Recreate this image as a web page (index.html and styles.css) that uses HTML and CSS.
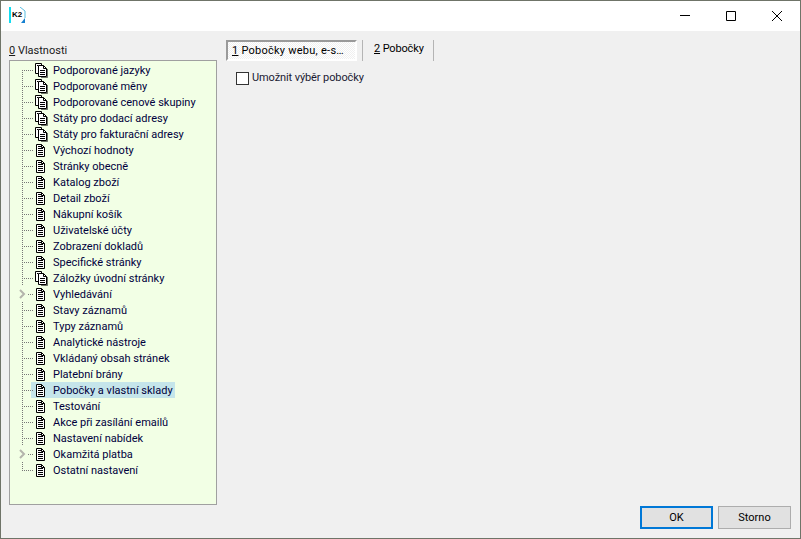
FILE: index.html
```html
<!DOCTYPE html>
<html lang="cs">
<head>
<meta charset="utf-8">
<title>K2</title>
<link rel="stylesheet" href="styles.css">
</head>
<body>
<svg class="defs" width="0" height="0" aria-hidden="true">
  <symbol id="page" viewBox="0 0 14 16">
    <path d="M2.500 2.500h5l3 3v9h-8z" fill="#fff" stroke="#000"/>
    <path d="M7.500 2.500v3h3M4 4.500h3M4 6.500h5M4 8.500h5M4 10.500h5M4 12.500h5" fill="none" stroke="#000"/>
  </symbol>
  <symbol id="pages" viewBox="0 0 14 16">
    <path d="M1.500 1.500h6v10h-6z" fill="#fff" stroke="#000"/>
    <path d="M4.500 3.500h5l3 3v8h-8z" fill="#fff" stroke="#000"/>
    <path d="M3 3.500h1M9.500 3.500v3h3M6 8.500h5M6 10.500h5M6 12.500h5" fill="none" stroke="#000"/>
    <path d="M13.500 7v8.500H7" fill="none" stroke="#000" opacity=".55"/>
  </symbol>
</svg>
<div class="window">
  <header class="titlebar">
    <svg class="logo" width="17" height="17" viewBox="0 0 17 17" aria-hidden="true">
      <rect x="0" y="0" width="2" height="16" fill="#12dcf0"/>
      <path d="M11 0l5 4v7" fill="none" stroke="#58bde0"/>
      <path d="M12 16l4-5v5h-4z" fill="#1680d0"/>
      <text x="3" y="10" class="logo-text">K2</text>
    </svg>
    <div class="controls">
      <svg width="12" height="12" viewBox="0 0 12 12" aria-hidden="true"><path d="M1 5.500h10" stroke="#000" fill="none"/></svg>
      <svg width="12" height="12" viewBox="0 0 12 12" aria-hidden="true"><path d="M1.500 1.500h9v9h-9z" stroke="#000" fill="none"/></svg>
      <svg width="12" height="12" viewBox="0 0 12 12" aria-hidden="true"><path d="M1 1l10 10M11 1L1 11" stroke="#000" fill="none"/></svg>
    </div>
  </header>
  <div class="content">
    <aside class="sidebar">
      <div class="side-label"><u>0</u> Vlastnosti</div>
      <ul class="tree">
        <li class="row first"><span class="branch"></span><svg class="ico"><use href="#pages"/></svg><span class="lbl">Podporované jazyky</span></li>
        <li class="row"><span class="branch"></span><svg class="ico"><use href="#pages"/></svg><span class="lbl">Podporované měny</span></li>
        <li class="row"><span class="branch"></span><svg class="ico"><use href="#pages"/></svg><span class="lbl">Podporované cenové skupiny</span></li>
        <li class="row"><span class="branch"></span><svg class="ico"><use href="#pages"/></svg><span class="lbl">Státy pro dodací adresy</span></li>
        <li class="row"><span class="branch"></span><svg class="ico"><use href="#pages"/></svg><span class="lbl">Státy pro fakturační adresy</span></li>
        <li class="row"><span class="branch"></span><svg class="ico"><use href="#page"/></svg><span class="lbl">Výchozí hodnoty</span></li>
        <li class="row"><span class="branch"></span><svg class="ico"><use href="#page"/></svg><span class="lbl">Stránky obecně</span></li>
        <li class="row"><span class="branch"></span><svg class="ico"><use href="#page"/></svg><span class="lbl">Katalog zboží</span></li>
        <li class="row"><span class="branch"></span><svg class="ico"><use href="#page"/></svg><span class="lbl">Detail zboží</span></li>
        <li class="row"><span class="branch"></span><svg class="ico"><use href="#page"/></svg><span class="lbl">Nákupní košík</span></li>
        <li class="row"><span class="branch"></span><svg class="ico"><use href="#page"/></svg><span class="lbl">Uživatelské účty</span></li>
        <li class="row"><span class="branch"></span><svg class="ico"><use href="#page"/></svg><span class="lbl">Zobrazení dokladů</span></li>
        <li class="row"><span class="branch"></span><svg class="ico"><use href="#page"/></svg><span class="lbl">Specifické stránky</span></li>
        <li class="row"><span class="branch"></span><svg class="ico"><use href="#pages"/></svg><span class="lbl">Záložky úvodní stránky</span></li>
        <li class="row"><span class="branch has-kids"><svg class="chev" width="7" height="10" viewBox="0 0 7 10" aria-hidden="true"><path d="M1 1l4 4-4 4" fill="none" stroke="#b4b4ac" stroke-width="2"/></svg></span><svg class="ico"><use href="#page"/></svg><span class="lbl">Vyhledávání</span></li>
        <li class="row"><span class="branch"></span><svg class="ico"><use href="#page"/></svg><span class="lbl">Stavy záznamů</span></li>
        <li class="row"><span class="branch"></span><svg class="ico"><use href="#page"/></svg><span class="lbl">Typy záznamů</span></li>
        <li class="row"><span class="branch"></span><svg class="ico"><use href="#page"/></svg><span class="lbl">Analytické nástroje</span></li>
        <li class="row"><span class="branch"></span><svg class="ico"><use href="#page"/></svg><span class="lbl">Vkládaný obsah stránek</span></li>
        <li class="row"><span class="branch"></span><svg class="ico"><use href="#page"/></svg><span class="lbl">Platební brány</span></li>
        <li class="row selected"><span class="branch"></span><svg class="ico"><use href="#page"/></svg><span class="lbl">Pobočky a vlastní sklady</span></li>
        <li class="row"><span class="branch"></span><svg class="ico"><use href="#page"/></svg><span class="lbl">Testování</span></li>
        <li class="row"><span class="branch"></span><svg class="ico"><use href="#page"/></svg><span class="lbl">Akce při zasílání emailů</span></li>
        <li class="row"><span class="branch"></span><svg class="ico"><use href="#page"/></svg><span class="lbl">Nastavení nabídek</span></li>
        <li class="row"><span class="branch has-kids"><svg class="chev" width="7" height="10" viewBox="0 0 7 10" aria-hidden="true"><path d="M1 1l4 4-4 4" fill="none" stroke="#b4b4ac" stroke-width="2"/></svg></span><svg class="ico"><use href="#page"/></svg><span class="lbl">Okamžitá platba</span></li>
        <li class="row last"><span class="branch"></span><svg class="ico"><use href="#page"/></svg><span class="lbl">Ostatní nastavení</span></li>
      </ul>
    </aside>
    <main class="panel">
      <div class="tabs">
        <div class="tab active"><u>1</u> Pobočky webu, e-s…</div>
        <div class="tab plain"><u>2</u> Pobočky</div>
      </div>
      <label class="check"><span class="box"></span>Umožnit výběr pobočky</label>
    </main>
  </div>
  <footer class="footer">
    <button class="btn default">OK</button>
    <button class="btn">Storno</button>
  </footer>
</div>
</body>
</html>
```
FILE: styles.css
```css
* { box-sizing: border-box; }
html, body { margin: 0; padding: 0; height: 100%; overflow: hidden; }
body { font: 11px/16px Roboto, "Noto Sans", sans-serif; color: #000; background: #f0f0f0; }
.defs { display: block; height: 0; }
.window {
  width: 801px; height: 539px;
  border: 1px solid #6f7468;
  display: flex; flex-direction: column;
  background: #f0f0f0;
}
.titlebar { height: 30px; background: #fff; display: flex; align-items: flex-start; justify-content: space-between; flex: none; }
.logo { margin: 6px 0 0 8px; }
.logo-text { font: bold 8px "Liberation Sans", sans-serif; fill: #000; }
.controls { display: flex; gap: 34px; padding: 9px 17px 0 0; }
.content { flex: 1; display: flex; min-height: 0; padding-left: 8px; }
.sidebar { width: 208px; display: flex; flex-direction: column; flex: none; height: 474px; }
.side-label { height: 29px; padding-top: 12px; line-height: 16px; color: #1a1a1a; }
.tree {
  list-style: none; margin: 0; padding: 1px 0 0 0;
  flex: 1;
  background: #f2ffe5;
  border: 1px solid #a0a0a0;
}
.row { height: 16px; display: flex; align-items: center; position: relative; width: max-content; padding-right: 2px; margin-left: 21px; padding-left: 3px; color: #00003c; }
.lbl { height: 16px; line-height: 18px; }
.branch { position: absolute; left: -9px; top: 0; width: 12px; height: 16px;
  background:
    repeating-linear-gradient(to bottom, #777 0 1px, transparent 1px 2px) left top / 1px 100% no-repeat,
    repeating-linear-gradient(to right, #777 0 1px, transparent 1px 2px) left 8px / 100% 1px no-repeat;
}
.first .branch { background:
    repeating-linear-gradient(to bottom, #777 0 1px, transparent 1px 2px) left 8px / 1px 8px no-repeat,
    repeating-linear-gradient(to right, #777 0 1px, transparent 1px 2px) left 8px / 100% 1px no-repeat; }
.last .branch { background:
    repeating-linear-gradient(to bottom, #777 0 1px, transparent 1px 2px) left top / 1px 9px no-repeat,
    repeating-linear-gradient(to right, #777 0 1px, transparent 1px 2px) left 8px / 100% 1px no-repeat; }
.has-kids { background:
    repeating-linear-gradient(to right, #777 0 1px, transparent 1px 2px) 6px 8px / 6px 1px no-repeat; }
.chev { position: absolute; left: -3px; top: 3px; }
.ico { width: 14px; height: 16px; flex: none; margin-right: 5px; }
.selected { background: #c5e5ea; }
.panel { flex: 1; padding: 9px 0 0 9px; min-width: 0; }
.tabs { display: flex; height: 21px; align-items: stretch; }
.tab { line-height: 18px; white-space: nowrap; }
.tab.active {
  width: 131px; padding-left: 4px; letter-spacing: .25px;
  border: 2px solid; border-color: #9a9a9a #fff #fff #9a9a9a;
  background: repeating-conic-gradient(#fff 0 25%, #f0f0f0 0 50%) 0 0 / 2px 2px;
}
.tab.plain { margin-left: 5px; width: 72px; padding-left: 11px; letter-spacing: -.15px; border-left: 1px solid #b4b4b4; border-right: 1px solid #b4b4b4; }
.check { display: flex; align-items: center; margin: 9px 0 0 10px; height: 16px; color: #1a1a32; letter-spacing: -.1px; }
.box { width: 13px; height: 13px; border: 1px solid #333; background: #fff; margin-right: 3px; flex: none; }
.footer { flex: none; height: 34px; display: flex; justify-content: flex-end; gap: 5px; padding: 2px 9px 0 0; }
.btn { width: 73px; height: 23px; font: inherit; background: #e1e1e1; border: 1px solid #adadad; padding: 1px 0 0; color: #000; }
.btn.default { border: 2px solid #0078d7; }
```
